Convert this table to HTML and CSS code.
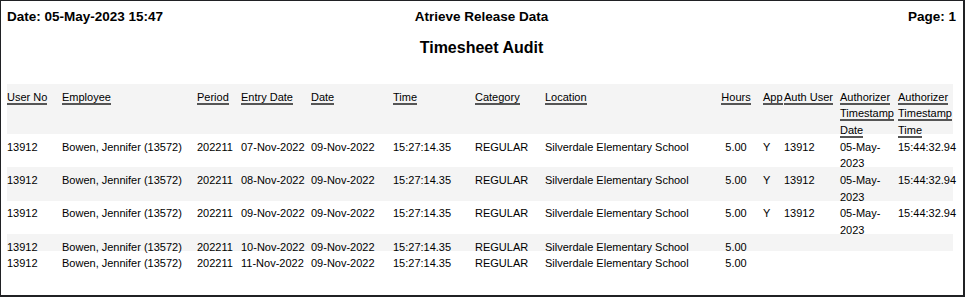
FILE: index.html
```html
<!DOCTYPE html>
<html lang="en">
<head>
<meta charset="utf-8">
<title>Timesheet Audit</title>
<link rel="stylesheet" href="styles.css">
</head>
<body>
<div class="page">
  <div class="topbar">
    <span class="tb-left">Date: 05-May-2023 15:47</span>
    <span class="tb-center">Atrieve Release Data</span>
    <span class="tb-right">Page: 1</span>
  </div>
  <h1 class="title">Timesheet Audit</h1>
  <div class="report">
    <div class="row head lines3">
      <div><span class="u">User No</span></div>
      <div><span class="u">Employee</span></div>
      <div><span class="u">Period</span></div>
      <div><span class="u">Entry Date</span></div>
      <div><span class="u">Date</span></div>
      <div><span class="u">Time</span></div>
      <div><span class="u">Category</span></div>
      <div><span class="u">Location</span></div>
      <div class="num"><span class="u">Hours</span></div>
      <div><span class="u">App</span></div>
      <div><span class="u">Auth User</span></div>
      <div><span class="u">Authorizer Timestamp Date</span></div>
      <div><span class="u">Authorizer Timestamp Time</span></div>
    </div>
    <div class="row lines2">
      <div>13912</div><div>Bowen, Jennifer (13572)</div><div>202211</div><div>07-Nov-2022</div><div>09-Nov-2022</div><div>15:27:14.35</div><div>REGULAR</div><div>Silverdale Elementary School</div><div class="num">5.00</div><div class="app">Y</div><div>13912</div><div>05-May-2023</div><div>15:44:32.94</div>
    </div>
    <div class="row lines2 alt">
      <div>13912</div><div>Bowen, Jennifer (13572)</div><div>202211</div><div>08-Nov-2022</div><div>09-Nov-2022</div><div>15:27:14.35</div><div>REGULAR</div><div>Silverdale Elementary School</div><div class="num">5.00</div><div class="app">Y</div><div>13912</div><div>05-May-2023</div><div>15:44:32.94</div>
    </div>
    <div class="row lines2">
      <div>13912</div><div>Bowen, Jennifer (13572)</div><div>202211</div><div>09-Nov-2022</div><div>09-Nov-2022</div><div>15:27:14.35</div><div>REGULAR</div><div>Silverdale Elementary School</div><div class="num">5.00</div><div class="app">Y</div><div>13912</div><div>05-May-2023</div><div>15:44:32.94</div>
    </div>
    <div class="row lines1 alt">
      <div>13912</div><div>Bowen, Jennifer (13572)</div><div>202211</div><div>10-Nov-2022</div><div>09-Nov-2022</div><div>15:27:14.35</div><div>REGULAR</div><div>Silverdale Elementary School</div><div class="num">5.00</div><div></div><div></div><div></div><div></div>
    </div>
    <div class="row lines1">
      <div>13912</div><div>Bowen, Jennifer (13572)</div><div>202211</div><div>11-Nov-2022</div><div>09-Nov-2022</div><div>15:27:14.35</div><div>REGULAR</div><div>Silverdale Elementary School</div><div class="num">5.00</div><div></div><div></div><div></div><div></div>
    </div>
  </div>
</div>
</body>
</html>
```

FILE: styles.css
```css
html, body {
  margin: 0;
  padding: 0;
  background: #ffffff;
}

body {
  font-family: "Liberation Sans", Arial, sans-serif;
  color: #000000;
}

.page {
  box-sizing: border-box;
  width: 965px;
  height: 297px;
  overflow: hidden;
  border-style: solid;
  border-color: #202124;
  border-width: 1px 2px 2px 1px;
  padding: 8px 7px 0 6px;
  background: #ffffff;
}

.topbar {
  display: grid;
  grid-template-columns: 1fr auto 1fr;
  font-weight: bold;
  font-size: 13.5px;
  line-height: 16px;
}

.tb-center {
  text-align: center;
}

.tb-right {
  text-align: right;
}

.title {
  margin: 13px 0 0;
  text-align: center;
  font-size: 16px;
  line-height: 19px;
  font-weight: bold;
}

.report {
  margin-top: 27px;
  width: 946px;
  font-size: 11px;
  line-height: 16.67px;
}

.row {
  display: grid;
  grid-template-columns: 55px 135px 44px 70px 82px 82px 70px 174px 44px 21px 56px 58px 55px;
  box-sizing: border-box;
  padding-top: 4.67px;
  background: #ffffff;
}

.row > div {
  min-width: 0;
  white-space: normal;
}

.lines3 { height: 50px; }
.lines2 { height: 33.33px; }
.lines1 { height: 16.67px; }

.head,
.alt {
  background: #f4f4f4;
}

.u {
  border-bottom: 2px solid #555555;
}

.num {
  text-align: center;
  padding-right: 10px;
}

.app {
  padding-left: 0;
}
```
